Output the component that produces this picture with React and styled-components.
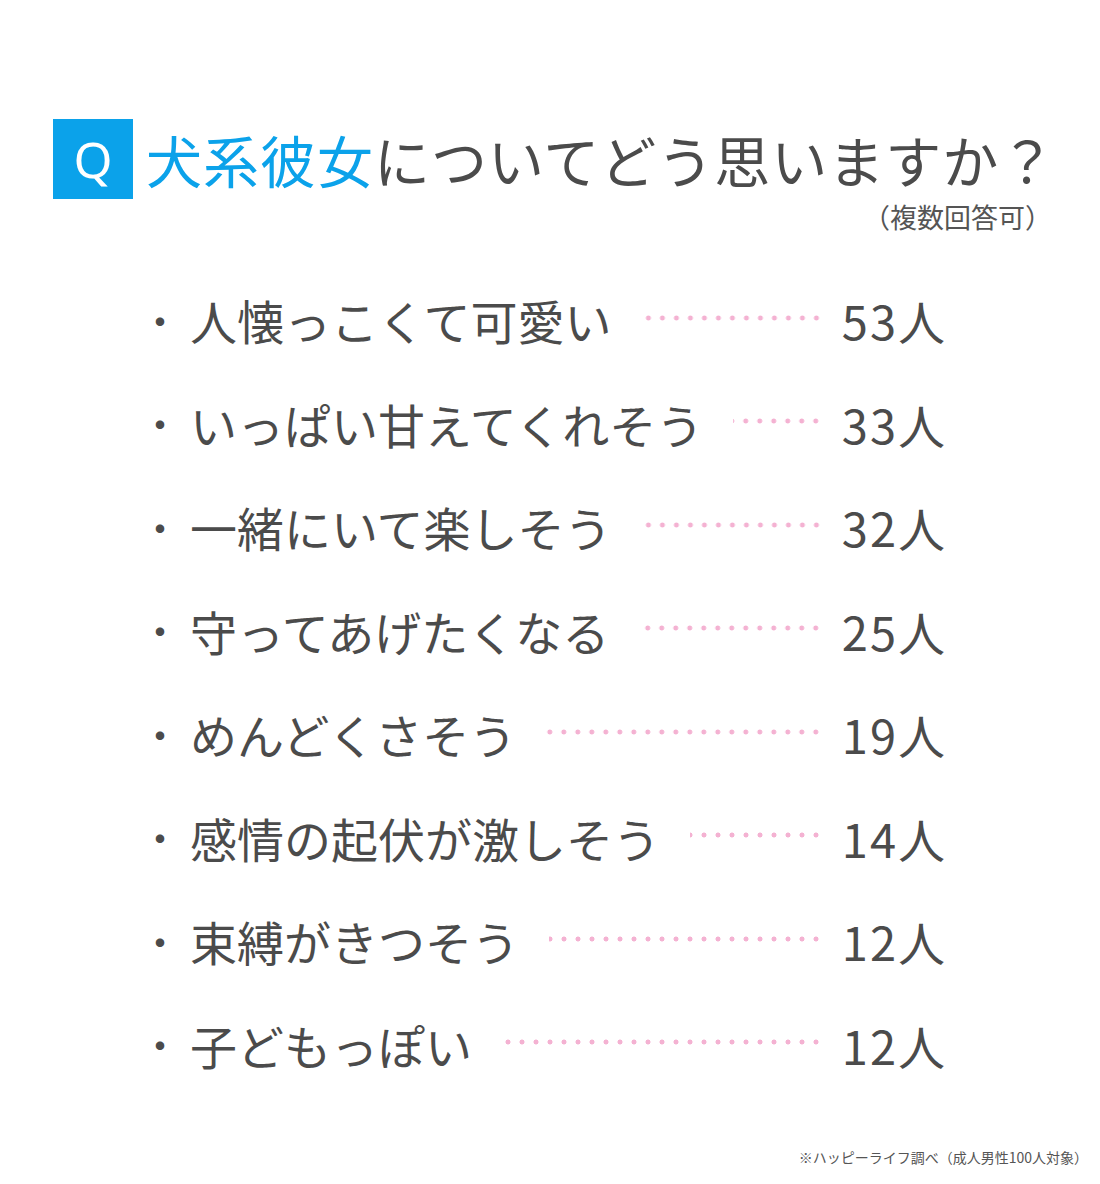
import React from 'react';
import styled, { createGlobalStyle } from 'styled-components';

const GlobalStyle = createGlobalStyle`
  html, body {
    margin: 0;
    padding: 0;
    background: #ffffff;
  }
  body {
    font-family: "Noto Sans CJK JP", "Noto Sans", sans-serif;
    color: #4b4b4b;
  }
`;

const Page = styled.div`
  width: 1100px;
  height: 1184px;
  box-sizing: border-box;
  padding-top: 119px;
  display: flex;
  flex-direction: column;
`;

const Header = styled.div`
  display: flex;
  align-items: center;
  gap: 13px;
  padding-left: 53px;
`;

const QBox = styled.div`
  width: 80px;
  height: 80px;
  background: #0ba2ea;
  color: #ffffff;
  display: flex;
  align-items: center;
  justify-content: center;
  font-family: "Noto Sans", "Open Sans", sans-serif;
  font-size: 50px;
  line-height: 1;
`;

const Title = styled.h1`
  margin: 0;
  font-size: 56px;
  font-weight: 400;
  letter-spacing: 1px;
  line-height: 80px;
  color: #4b4b4b;
  white-space: nowrap;
`;

const Accent = styled.span`
  color: #0ba2ea;
`;

const Note = styled.div`
  align-self: flex-end;
  padding-right: 48px;
  margin-top: 3px;
  font-size: 27px;
  line-height: 30px;
  color: #555555;
`;

const List = styled.ul`
  list-style: none;
  margin: 36px 0 0;
  padding: 0 155px 0 140px;
`;

const Row = styled.li`
  height: 103.5px;
  display: flex;
  align-items: center;
  font-size: 47px;
  color: #4b4b4b;
`;

const Bullet = styled.span`
  width: 50px;
  flex: none;
  font-size: 40px;
`;

const Label = styled.span`
  white-space: nowrap;
  flex: none;
`;

const Dots = styled.span`
  flex: 1;
  height: 6px;
  margin: 0 18px 4px 30px;
  background-image: radial-gradient(circle, #f4b2d2 2.2px, transparent 2.8px);
  background-size: 14px 6px;
  background-repeat: repeat-x;
  background-position: right center;
`;

const Count = styled.span`
  flex: none;
  white-space: nowrap;
  width: 106px;
  text-align: right;
  letter-spacing: 2px;
  margin-right: -2px;
`;

const Footnote = styled.div`
  margin-top: auto;
  margin-bottom: 17px;
  align-self: flex-end;
  padding-right: 12px;
  font-size: 14px;
  line-height: 20px;
  color: #555555;
`;

const items = [
  ['人懐っこくて可愛い', 53],
  ['いっぱい甘えてくれそう', 33],
  ['一緒にいて楽しそう', 32],
  ['守ってあげたくなる', 25],
  ['めんどくさそう', 19],
  ['感情の起伏が激しそう', 14],
  ['束縛がきつそう', 12],
  ['子どもっぽい', 12],
];

export default function App() {
  return (
    <>
      <GlobalStyle />
      <Page>
        <Header>
          <QBox>Q</QBox>
          <Title>
            <Accent>犬系彼女</Accent>についてどう思いますか？
          </Title>
        </Header>
        <Note>（複数回答可）</Note>
        <List>
          {items.map(([label, n], i) => (
            <Row key={i}>
              <Bullet>・</Bullet>
              <Label>{label}</Label>
              <Dots />
              <Count>{n}人</Count>
            </Row>
          ))}
        </List>
        <Footnote>※ハッピーライフ調べ（成人男性100人対象）</Footnote>
      </Page>
    </>
  );
}
